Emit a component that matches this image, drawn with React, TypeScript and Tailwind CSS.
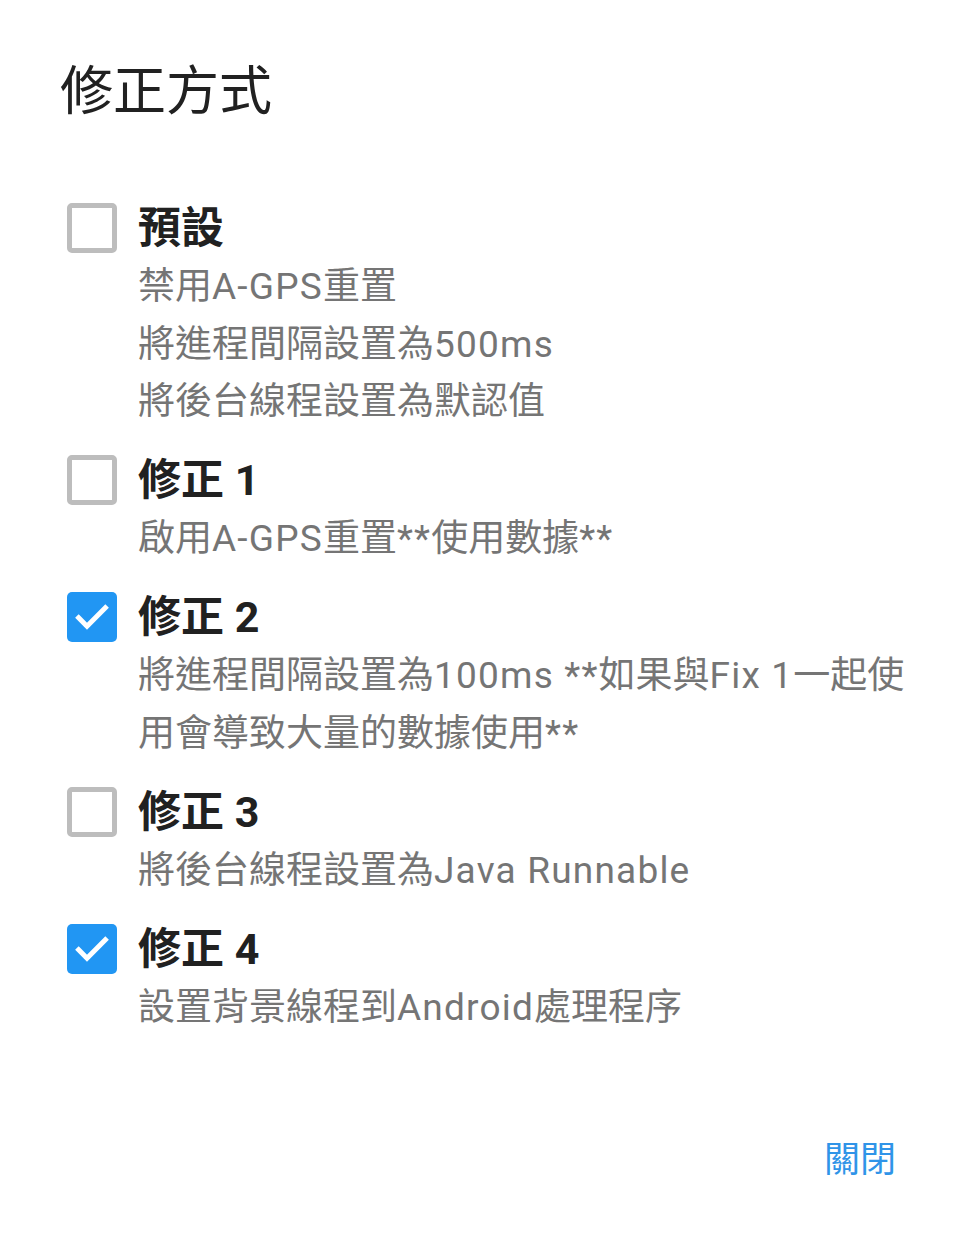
import React from 'react';

const font = { fontFamily: "Roboto, 'Noto Sans CJK TC', sans-serif" };

type Item = { title: string; lines: string[]; checked: boolean };

const items: Item[] = [
  { title: '預設', lines: ['禁用A-GPS重置', '將進程間隔設置為500ms', '將後台線程設置為默認值'], checked: false },
  { title: '修正 1', lines: ['啟用A-GPS重置**使用數據**'], checked: false },
  { title: '修正 2', lines: ['將進程間隔設置為100ms **如果與Fix 1一起使用會導致大量的數據使用**'], checked: true },
  { title: '修正 3', lines: ['將後台線程設置為Java Runnable'], checked: false },
  { title: '修正 4', lines: ['設置背景線程到Android處理程序'], checked: true },
];

const Mixed: React.FC<{ text: string }> = ({ text }) => (
  <>
    {text.split(/([\x00-\x7F]+)/).map((part, i) =>
      /^[\x00-\x7F]+$/.test(part) ? (
        <span key={i} className="tracking-[1.2px]">{part}</span>
      ) : (
        <React.Fragment key={i}>{part}</React.Fragment>
      )
    )}
  </>
);

const Box: React.FC<{ checked: boolean }> = ({ checked }) =>
  checked ? (
    <div className="w-[50px] h-[50px] rounded-[5px] bg-[#2196f3] flex items-center justify-center shrink-0">
      <svg width="40" height="40" viewBox="0 0 24 24" fill="none" stroke="white" strokeWidth="3" strokeLinecap="square">
        <path d="M4 12.5l5 5L20 6.5" />
      </svg>
    </div>
  ) : (
    <div className="w-[50px] h-[50px] rounded-[5px] border-[5px] border-[#bdbdbd] shrink-0" />
  );

export default function App() {
  return (
    <div className="w-[976px] h-[1244px] bg-white relative" style={font}>
      <div className="pl-[60px] pt-[62px]">
        <h1 className="text-[53px] leading-[60px] text-[#212121] font-normal">修正方式</h1>
      </div>
      <div className="pl-[67px] pt-[76px] flex flex-col gap-[19.5px]">
        {items.map((it, i) => (
          <div key={i} className="flex gap-[21px]">
            <div className="h-[60px] flex items-center">
              <Box checked={it.checked} />
            </div>
            <div className="w-[772px]">
              <div className="text-[43px] leading-[60px] font-bold text-[#212121]">{it.title}</div>
              <div className="text-[37px] leading-[57.5px] text-[#757575]">
                {it.lines.map((l, j) => (
                  <div key={j}>
                    <Mixed text={l} />
                  </div>
                ))}
              </div>
            </div>
          </div>
        ))}
      </div>
      <div className="absolute right-[80px] top-[1136px] text-[36px] leading-[48px] text-[#2f94e8]">關閉</div>
    </div>
  );
}
